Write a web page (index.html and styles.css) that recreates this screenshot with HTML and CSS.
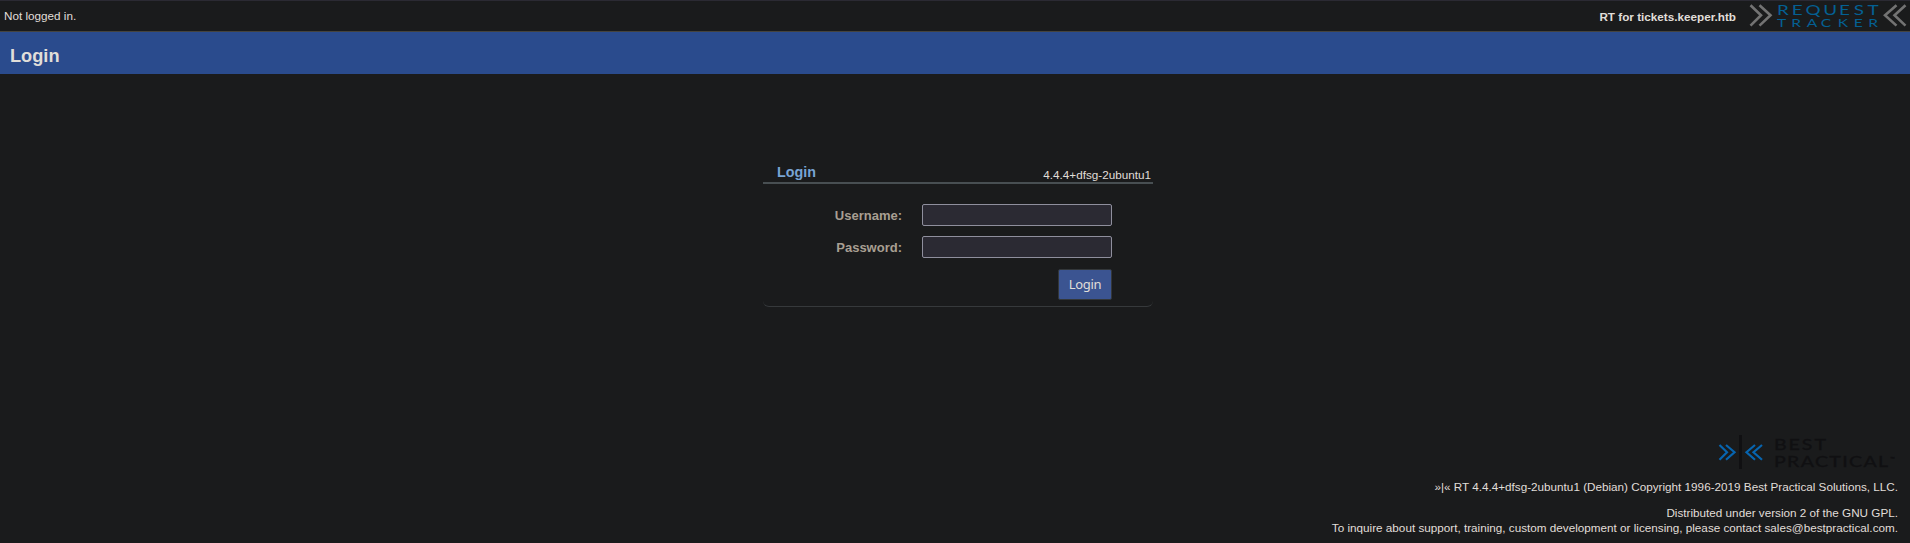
FILE: index.html
```html
<!DOCTYPE html>
<html lang="en">
<head>
<meta charset="utf-8">
<title>Login</title>
<link rel="stylesheet" href="styles.css">
</head>
<body>
<header class="topbar">
  <span class="status">Not logged in.</span>
  <span class="instance">RT for tickets.keeper.htb</span>
  <svg class="rt-logo" width="160" height="30" viewBox="1748 0 160 30" role="img" aria-label="Request Tracker">
    <g class="rt-arrows">
      <path d="M1750.5 5.2 1761 15.2 1750.5 25.6M1759.5 5.2 1770.5 15.2 1759.5 25.6"/>
      <path d="M1896.5 5.2 1885 15.2 1896.5 25.6M1905.5 5.2 1894.5 15.2 1905.5 25.6"/>
    </g>
    <g class="rt-word">
      <text class="rt-big" transform="translate(1777 15.2) scale(1.35 1)" x="0 11 21.1 34.2 45.9 56.8 67.1">REQUEST</text>
      <text class="rt-small" transform="translate(1777 27) scale(1.3 1)" x="0 11 22.8 33.6 46.8 59.1 70.1">TRACKER</text>
    </g>
  </svg>
</header>
<div class="titlebar"><h1>Login</h1></div>
<main class="panel">
  <div class="panel-head"><h2>Login</h2><span class="version">4.4.4+dfsg-2ubuntu1</span></div>
  <form class="form">
    <div class="row"><label class="label" for="user">Username:</label><input class="field" id="user" type="text"></div>
    <div class="row"><label class="label" for="pass">Password:</label><input class="field" id="pass" type="password"></div>
    <div class="actions"><button class="submit" type="button">Login</button></div>
  </form>
</main>
<footer class="footer">
  <svg class="bp-logo" width="180" height="36" viewBox="1718 434 180 36" role="img" aria-label="Best Practical">
    <g class="bp-arrows">
      <path d="M1719.5 445 1727 452.2 1719.5 459.7M1726 445 1734.5 452.2 1726 459.7"/>
      <path d="M1755 445 1746.5 452.2 1755 459.7M1762 445 1753.5 452.2 1762 459.7"/>
    </g>
    <rect class="bp-bar" x="1739" y="435" width="3" height="34"/>
    <g class="bp-word">
      <text transform="translate(1774 450.3) scale(1.35 1)" textLength="38.5" lengthAdjust="spacing">BEST</text>
      <text transform="translate(1774 467) scale(1.35 1)" textLength="84.5" lengthAdjust="spacing">PRACTICAL</text>
      <text class="bp-tm" x="1890" y="461">™</text>
    </g>
  </svg>
  <p class="copyright">»|« RT 4.4.4+dfsg-2ubuntu1 (Debian) Copyright 1996-2019 Best Practical Solutions, LLC.</p>
  <p class="license">Distributed under version 2 of the GNU GPL.<br>To inquire about support, training, custom development or licensing, please contact sales@bestpractical.com.</p>
</footer>
</body>
</html>
```
FILE: styles.css
```css
* { box-sizing: border-box; }
body {
  margin: 0;
  height: 543px;
  display: flex;
  flex-direction: column;
  overflow: hidden;
  background: #1a1b1c;
  color: #e0ded9;
  font-family: "Liberation Sans", Arial, sans-serif;
  font-size: 11.71px;
}
h1, h2, p { margin: 0; }
.topbar {
  display: flex;
  height: 32px;
  padding: 0 2px 0 4px;
  border-top: 1px solid #2b2a33;
  border-bottom: 1px solid #45443f;
  line-height: 30px;
}
.status { flex: 1; }
.instance { font-weight: bold; margin-right: 12px; line-height: 31px; }
.rt-logo { margin-top: -1px; }
.rt-arrows { fill: none; stroke: #737373; stroke-width: 2.6; }
.rt-word { fill: #046093; font-family: Lato, sans-serif; }
.rt-big { font-size: 14px; }
.rt-small { font-size: 12px; }
.titlebar {
  height: 42px;
  padding-left: 10px;
  background: #2a4b8d;
}
h1 { font-size: 18.2px; line-height: 48px; }
.panel {
  width: 390px;
  height: 144px;
  margin: 89px 0 0 763px;
  border-bottom: 1px solid #36393b;
  border-radius: 0 0 6px 6px;
}
.panel-head {
  display: flex;
  justify-content: space-between;
  height: 21px;
  padding: 0 2px 0 14px;
  border-bottom: 2px solid #484f52;
}
h2 { color: #78a4d4; font-size: 14.3px; line-height: 18px; }
.version { line-height: 24px; }
.form { display: flex; flex-direction: column; gap: 10px; padding: 20px 41px 0 0; }
.row { display: flex; justify-content: flex-end; gap: 20px; height: 22px; }
.label { color: #a89f92; font-size: 13px; font-weight: bold; line-height: 23px; }
.field {
  width: 190px;
  height: 22px;
  padding: 1px 2px;
  border: 1px solid #8f8f9d;
  border-radius: 2px;
  background: #2b2a33;
  color: #e0ded9;
}
.actions { display: flex; justify-content: flex-end; margin-top: 1px; }
.submit {
  width: 54px;
  height: 31px;
  padding: 0 0 2px;
  border: 1px solid #33373a;
  border-radius: 2px;
  background: #3b5491;
  color: #e0ded9;
  font-family: "Noto Sans", sans-serif;
  font-size: 13px;
  letter-spacing: -.35px;
}
.footer {
  display: flex;
  flex-direction: column;
  align-items: flex-end;
  margin-top: 127px;
  padding-right: 12px;
  text-align: right;
}
.bp-arrows { fill: none; stroke: #0765b0; stroke-width: 2.2; }
.bp-bar { fill: #101012; }
.bp-word { fill: #101012; stroke: #101012; stroke-width: .3; font-family: Lato, sans-serif; font-size: 14.5px; }
.bp-tm { font-size: 6px; }
.copyright { margin-top: 9px; line-height: 15px; }
.license { margin-top: 11px; line-height: 15px; }
```
